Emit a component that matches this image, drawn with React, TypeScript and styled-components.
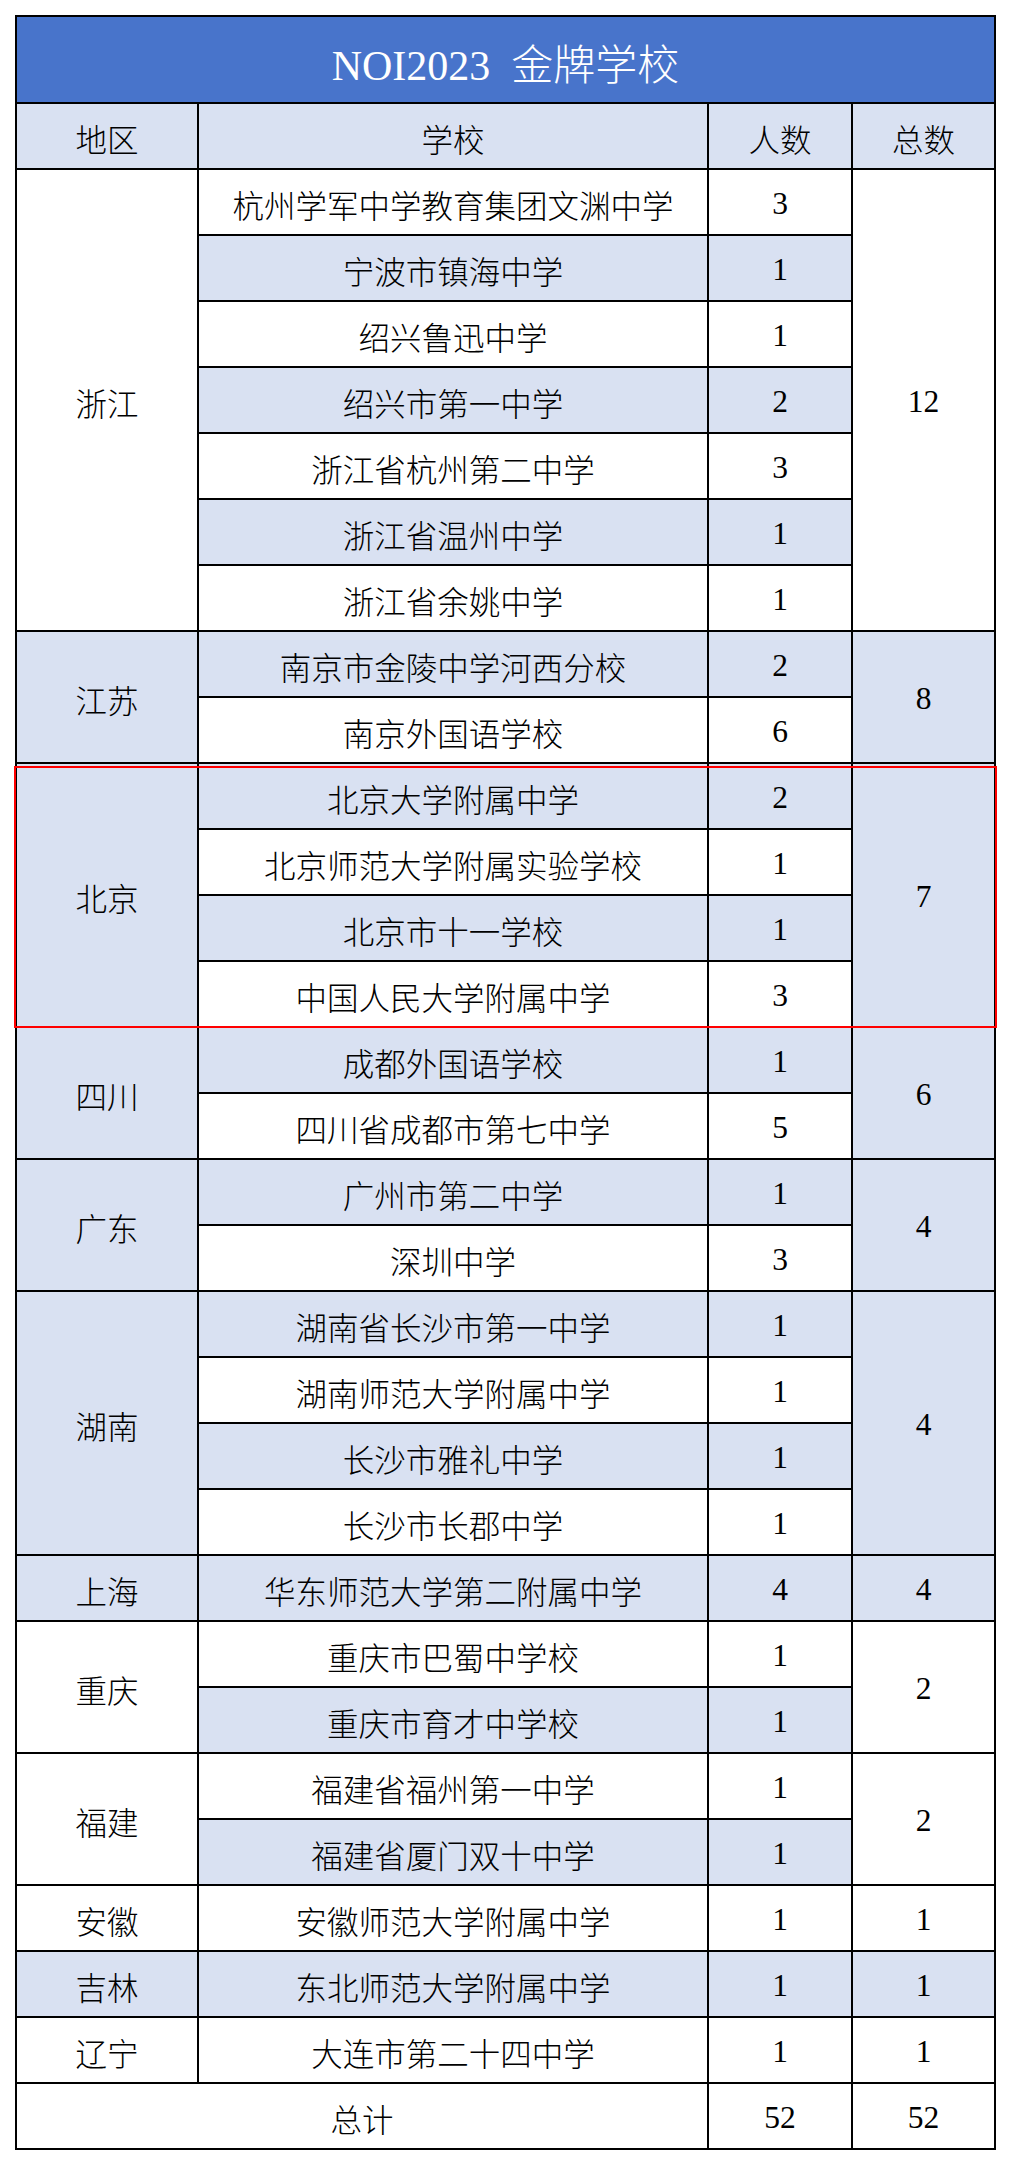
import React from 'react';
import styled, { createGlobalStyle } from 'styled-components';

const GlobalStyle = createGlobalStyle`
  html, body {
    margin: 0;
    padding: 0;
    background: #fff;
  }
  body {
    font-family: "Liberation Serif", "Noto Sans CJK SC", serif;
    font-weight: 300;
    color: #000;
  }
`;

const LIGHT = '#D9E1F2';

const Page = styled.div`
  padding: 15px;
`;

const Table = styled.div`
  display: grid;
  grid-template-columns: 180px 508px 142px 141px;
  grid-template-rows: 85px repeat(31, 64px);
  gap: 2px;
  padding: 2px;
  width: max-content;
  background: #000;
`;

const Cell = styled.div<{ $row: number; $col: string; $span?: number; $shade?: boolean }>`
  grid-row: ${({ $row, $span }) => `${$row} / span ${$span ?? 1}`};
  grid-column: ${({ $col }) => $col};
  background: ${({ $shade }) => ($shade ? LIGHT : '#fff')};
  display: flex;
  align-items: center;
  justify-content: center;
  font-size: 31.5px;
  padding-top: 4px;
  box-sizing: border-box;
  white-space: nowrap;
`;

const TitleCell = styled.div`
  grid-row: 1;
  grid-column: 1 / -1;
  background: #4874cb;
  color: #fff;
  display: flex;
  align-items: center;
  justify-content: center;
  font-size: 42px;
  white-space: pre;
  padding-top: 4px;
`;

// red frame drawn over one region's block of rows
const Highlight = styled.div<{ $row: number; $span: number }>`
  grid-row: ${({ $row, $span }) => `${$row} / span ${$span}`};
  grid-column: 1 / -1;
  margin: 2px -3px -2px -3px;
  border: 2px solid #ff0000;
  z-index: 1;
  pointer-events: none;
`;

type School = { name: string; count: number };
type Region = { region: string; total: number; shade: boolean; schools: School[]; marked?: boolean };

const regions: Region[] = [
  {
    region: '浙江',
    total: 12,
    shade: false,
    schools: [
      { name: '杭州学军中学教育集团文渊中学', count: 3 },
      { name: '宁波市镇海中学', count: 1 },
      { name: '绍兴鲁迅中学', count: 1 },
      { name: '绍兴市第一中学', count: 2 },
      { name: '浙江省杭州第二中学', count: 3 },
      { name: '浙江省温州中学', count: 1 },
      { name: '浙江省余姚中学', count: 1 },
    ],
  },
  {
    region: '江苏',
    total: 8,
    shade: true,
    schools: [
      { name: '南京市金陵中学河西分校', count: 2 },
      { name: '南京外国语学校', count: 6 },
    ],
  },
  {
    region: '北京',
    total: 7,
    shade: true,
    marked: true,
    schools: [
      { name: '北京大学附属中学', count: 2 },
      { name: '北京师范大学附属实验学校', count: 1 },
      { name: '北京市十一学校', count: 1 },
      { name: '中国人民大学附属中学', count: 3 },
    ],
  },
  {
    region: '四川',
    total: 6,
    shade: true,
    schools: [
      { name: '成都外国语学校', count: 1 },
      { name: '四川省成都市第七中学', count: 5 },
    ],
  },
  {
    region: '广东',
    total: 4,
    shade: true,
    schools: [
      { name: '广州市第二中学', count: 1 },
      { name: '深圳中学', count: 3 },
    ],
  },
  {
    region: '湖南',
    total: 4,
    shade: true,
    schools: [
      { name: '湖南省长沙市第一中学', count: 1 },
      { name: '湖南师范大学附属中学', count: 1 },
      { name: '长沙市雅礼中学', count: 1 },
      { name: '长沙市长郡中学', count: 1 },
    ],
  },
  {
    region: '上海',
    total: 4,
    shade: true,
    schools: [{ name: '华东师范大学第二附属中学', count: 4 }],
  },
  {
    region: '重庆',
    total: 2,
    shade: false,
    schools: [
      { name: '重庆市巴蜀中学校', count: 1 },
      { name: '重庆市育才中学校', count: 1 },
    ],
  },
  {
    region: '福建',
    total: 2,
    shade: false,
    schools: [
      { name: '福建省福州第一中学', count: 1 },
      { name: '福建省厦门双十中学', count: 1 },
    ],
  },
  { region: '安徽', total: 1, shade: false, schools: [{ name: '安徽师范大学附属中学', count: 1 }] },
  { region: '吉林', total: 1, shade: true, schools: [{ name: '东北师范大学附属中学', count: 1 }] },
  { region: '辽宁', total: 1, shade: false, schools: [{ name: '大连市第二十四中学', count: 1 }] },
];

const HEADER_ROW = 2;
const FIRST_ROW = 3;

export default function App() {
  const cells: React.ReactNode[] = [];
  const marks: React.ReactNode[] = [];
  let row = FIRST_ROW;
  let index = 0;
  let sum = 0;

  regions.forEach((g) => {
    const span = g.schools.length;
    cells.push(
      <Cell key={`r-${g.region}`} $row={row} $col="1" $span={span} $shade={g.shade}>
        {g.region}
      </Cell>,
      <Cell key={`t-${g.region}`} $row={row} $col="4" $span={span} $shade={g.shade}>
        {g.total}
      </Cell>,
    );
    if (g.marked) marks.push(<Highlight key={`m-${g.region}`} $row={row} $span={span} />);
    g.schools.forEach((s) => {
      index += 1;
      sum += s.count;
      const shade = index % 2 === 0;
      cells.push(
        <Cell key={`s-${s.name}`} $row={row} $col="2" $shade={shade}>
          {s.name}
        </Cell>,
        <Cell key={`c-${s.name}`} $row={row} $col="3" $shade={shade}>
          {s.count}
        </Cell>,
      );
      row += 1;
    });
  });

  return (
    <>
      <GlobalStyle />
      <Page>
        <Table>
          <TitleCell>{'NOI2023  金牌学校'}</TitleCell>
          <Cell $row={HEADER_ROW} $col="1" $shade>地区</Cell>
          <Cell $row={HEADER_ROW} $col="2" $shade>学校</Cell>
          <Cell $row={HEADER_ROW} $col="3" $shade>人数</Cell>
          <Cell $row={HEADER_ROW} $col="4" $shade>总数</Cell>
          {cells}
          <Cell $row={row} $col="1 / 3">总计</Cell>
          <Cell $row={row} $col="3">{sum}</Cell>
          <Cell $row={row} $col="4">{sum}</Cell>
          {marks}
        </Table>
      </Page>
    </>
  );
}
